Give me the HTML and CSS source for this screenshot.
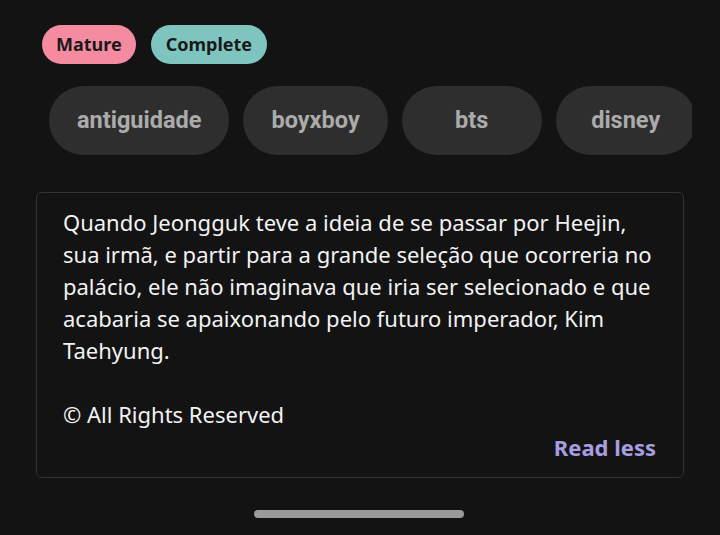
FILE: index.html
```html
<!DOCTYPE html>
<html lang="pt">
<head>
    <meta charset="UTF-8">
    <meta name="viewport" content="width=device-width, initial-scale=1.0">
    <title>Story details</title>
    <link rel="stylesheet" href="styles.css">
</head>
<body>
<div class="story-meta">
    <div class="badges">
        <span class="badge mature">Mature</span>
        <span class="badge complete">Complete</span>
    </div>
    <div class="tags">
        <span class="tag">antiguidade</span>
        <span class="tag">boyxboy</span>
        <span class="tag">bts</span>
        <span class="tag">disney</span>
    </div>
    <div class="description">
        <p>Quando Jeongguk teve a ideia de se passar por Heejin, sua irmã, e partir para a grande seleção que ocorreria no palácio, ele não imaginava que iria ser selecionado e que acabaria se apaixonando pelo futuro imperador, Kim Taehyung.</p>
        <p>© All Rights Reserved</p>
        <div class="read-less">Read less</div>
    </div>
    <div class="home-bar"></div>
</div>
</body>
</html>
```

FILE: styles.css
```css
body {
    margin: 0;
    background: #131313;
    font-family: "Noto Sans", sans-serif;
    color: #f2f2f2;
}

.story-meta {
    padding: 25px 36px 0 36px;
}

.badges {
    display: flex;
    gap: 15px;
    padding-left: 6px;
}

.badge {
    height: 39px;
    line-height: 39px;
    padding: 0 15px;
    border-radius: 20px;
    font-size: 18px;
    font-weight: 700;
    color: #1a1a1a;
}
.badge.mature {
    padding: 0 14px;
    background: #f58ba1;
}
.badge.complete {
    background: #7ec5c0;
}

.tags {
    display: flex;
    gap: 14px;
    margin-top: 22px;
    margin-left: 13px;
    width: 643px;
    overflow: hidden;
}

.tag {
    flex: none;
    min-width: 140px;
    box-sizing: border-box;
    height: 69px;
    line-height: 69px;
    padding: 0 28px;
    border-radius: 35px;
    background: #2e2e2e;
    color: #ababab;
    font-family: Roboto, sans-serif;
    font-size: 23.5px;
    font-weight: 700;
    text-align: center;
}

.description {
    margin-top: 37px;
    width: 648px;
    box-sizing: border-box;
    border: 1.5px solid #333333;
    border-radius: 6px;
    padding: 13px 27px 14px 26px;
    font-size: 22px;
    line-height: 32px;
}

.description p {
    margin: 0 0 32px 0;
}
.description p:last-of-type {
    margin-bottom: 1px;
}

.read-less {
    text-align: right;
    color: #a79ee0;
    font-weight: 700;
}

.home-bar {
    width: 210px;
    height: 8px;
    margin: 32px auto 0 auto;
    border-radius: 4px;
    background: #9a9a9a;
    position: relative;
    left: -1px;
}
```
